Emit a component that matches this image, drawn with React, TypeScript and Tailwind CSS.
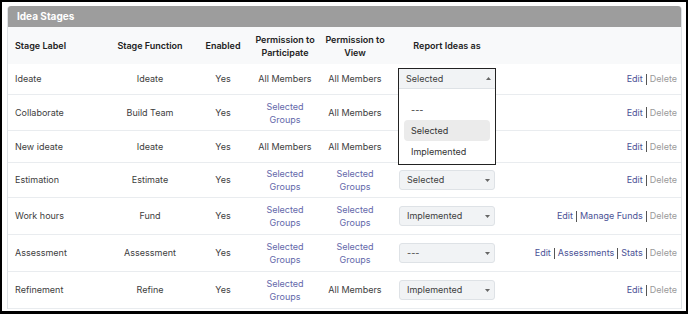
import React from "react";

type Perm = "all" | "groups";

type Stage = {
  label: string;
  fn: string;
  participate: Perm;
  view: Perm;
  report?: string;
  open?: boolean;
  actions: string[];
  h: string;
};

// rows 2 and 3 sit under the open dropdown, so their selects are not drawn
const stages: Stage[] = [
  { label: "Ideate", fn: "Ideate", participate: "all", view: "all", report: "Selected", open: true, actions: ["Edit"], h: "h-[31px]" },
  { label: "Collaborate", fn: "Build Team", participate: "groups", view: "all", actions: ["Edit"], h: "h-[36px]" },
  { label: "New ideate", fn: "Ideate", participate: "all", view: "all", actions: ["Edit"], h: "h-[32px]" },
  { label: "Estimation", fn: "Estimate", participate: "groups", view: "groups", report: "Selected", actions: ["Edit"], h: "h-[35px]" },
  { label: "Work hours", fn: "Fund", participate: "groups", view: "groups", report: "Implemented", actions: ["Edit", "Manage Funds"], h: "h-[37px]" },
  { label: "Assessment", fn: "Assessment", participate: "groups", view: "groups", report: "---", actions: ["Edit", "Assessments", "Stats"], h: "h-[37px]" },
  { label: "Refinement", fn: "Refine", participate: "groups", view: "all", report: "Implemented", actions: ["Edit"], h: "h-[37px]" },
];

const cols = "grid grid-cols-[93px_98px_48px_76px_64px_120px_174px] items-center";

function Caret({ up }: { up?: boolean }) {
  return (
    <svg width="5" height="3" viewBox="0 0 5 3" className="shrink-0">
      {up ? <path d="M0 3 L2.5 0 L5 3 Z" fill="#666" /> : <path d="M0 0 L5 0 L2.5 3 Z" fill="#666" />}
    </svg>
  );
}

function PermCell({ value }: { value: Perm }) {
  if (value === "all") return <div className="text-center text-[#3d3d3d]">All Members</div>;
  return (
    <div className="text-center leading-[13px] text-[#6468aa]">
      Selected
      <br />
      Groups
    </div>
  );
}

function ReportSelect({ value, open }: { value?: string; open?: boolean }) {
  if (!value) return <div />;
  return (
    <div className="relative mx-auto h-[20px] w-[96px]">
      <div className="flex h-full items-center justify-between rounded-[3px] border border-[#dee2e6] bg-[#f1f3f5] pl-[7px] pr-[4px] text-[#3d3d3d]">
        <span>{value}</span>
        <Caret />
      </div>
      {open && (
        <div className="absolute left-[-1px] top-[-1px] z-10 h-[97px] w-[98px] border border-[#222] bg-white">
          <div className="flex h-[20px] items-center justify-between border-b border-[#dee2e6] bg-[#f1f3f5] pl-[7px] pr-[4px] text-[#3d3d3d]">
            <span>{value}</span>
            <Caret up />
          </div>
          <div className="pt-[10px]">
            {["---", "Selected", "Implemented"].map((o) => (
              <div
                key={o}
                className={
                  o === value
                    ? "mx-[5px] flex h-[21px] items-center rounded-[4px] bg-[#ebebeb] pl-[7px] text-[#333]"
                    : "mx-[5px] flex h-[21px] items-center pl-[7px] text-[#333]"
                }
              >
                {o}
              </div>
            ))}
          </div>
        </div>
      )}
    </div>
  );
}

function Actions({ items }: { items: string[] }) {
  const all = [...items, "Delete"];
  return (
    <div className="flex items-center justify-end pr-[4px]">
      {all.map((a, i) => (
        <React.Fragment key={a}>
          {i > 0 && <span className="mx-[3px] h-[11px] w-px bg-[#555]" />}
          <span className={a === "Delete" ? "text-[#9a9a9a]" : "text-[#4c5296]"}>{a}</span>
        </React.Fragment>
      ))}
    </div>
  );
}

export default function App() {
  return (
    <div className="h-[314px] w-[688px] border-2 border-b-[3px] border-black bg-white pl-[5px] pt-[4px] font-['Inter',sans-serif] text-[9px]">
      <div className="w-[675px] rounded-t-[4px] border-x border-[#dee2e6]">
        <div className="flex h-[21px] items-center rounded-t-[3px] bg-[#9d9d9d] pl-[9px] text-[10px] font-bold text-white">
          Idea Stages
        </div>

        <div className={`${cols} h-[37px] bg-[#f8f9fa] font-semibold leading-[13px] text-[#222]`}>
          <div className="pl-[7px]">Stage Label</div>
          <div className="text-center">Stage Function</div>
          <div className="text-center">Enabled</div>
          <div className="whitespace-nowrap text-center">
            Permission to
            <br />
            Participate
          </div>
          <div className="whitespace-nowrap text-center">
            Permission to
            <br />
            View
          </div>
          <div className="text-center">Report Ideas as</div>
          <div />
        </div>

        {stages.map((s) => (
          <div key={s.label} className={`${cols} ${s.h} border-b border-[#e9ecef] text-[#3d3d3d]`}>
            <div className="pl-[7px]">{s.label}</div>
            <div className="text-center">{s.fn}</div>
            <div className="text-center">Yes</div>
            <PermCell value={s.participate} />
            <PermCell value={s.view} />
            <ReportSelect value={s.report} open={s.open} />
            <Actions items={s.actions} />
          </div>
        ))}
      </div>
    </div>
  );
}
